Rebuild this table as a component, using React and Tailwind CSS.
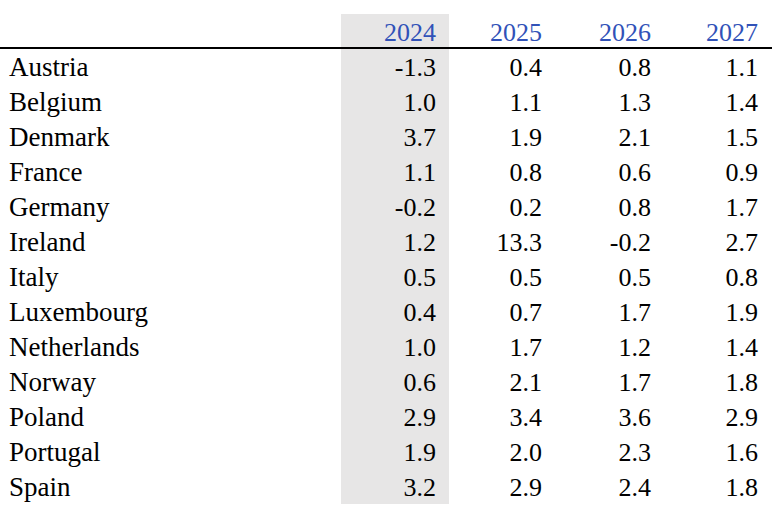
import React from "react";

const rows = [
  ["Austria", "-1.3", "0.4", "0.8", "1.1"],
  ["Belgium", "1.0", "1.1", "1.3", "1.4"],
  ["Denmark", "3.7", "1.9", "2.1", "1.5"],
  ["France", "1.1", "0.8", "0.6", "0.9"],
  ["Germany", "-0.2", "0.2", "0.8", "1.7"],
  ["Ireland", "1.2", "13.3", "-0.2", "2.7"],
  ["Italy", "0.5", "0.5", "0.5", "0.8"],
  ["Luxembourg", "0.4", "0.7", "1.7", "1.9"],
  ["Netherlands", "1.0", "1.7", "1.2", "1.4"],
  ["Norway", "0.6", "2.1", "1.7", "1.8"],
  ["Poland", "2.9", "3.4", "3.6", "2.9"],
  ["Portugal", "1.9", "2.0", "2.3", "1.6"],
  ["Spain", "3.2", "2.9", "2.4", "1.8"],
];

export default function App() {
  return (
    <div
      className="w-[776px] h-[528px] bg-white text-black pt-[14px]"
      style={{ fontFamily: '"Liberation Serif", "Times New Roman", serif' }}
    >
      <div className="w-[772px] grid grid-cols-[341px_108px_109px_109px_105px] text-[26px] leading-[37px]">
        <div className="h-[35px] border-b-2 border-black"></div>
        <div className="h-[35px] border-b-2 border-black bg-[#e7e6e6] text-right pr-[13px] text-[#3152b8]">2024</div>
        <div className="h-[35px] border-b-2 border-black text-right pr-[16px] text-[#3152b8]">2025</div>
        <div className="h-[35px] border-b-2 border-black text-right pr-[16px] text-[#3152b8]">2026</div>
        <div className="h-[35px] border-b-2 border-black text-right pr-[14px] text-[#3152b8]">2027</div>
        {rows.map((r) => (
          <React.Fragment key={r[0]}>
            <div className="h-[35px] pl-[9px] text-[27px]">{r[0]}</div>
            <div className="h-[35px] bg-[#e7e6e6] text-right pr-[13px]">{r[1]}</div>
            <div className="h-[35px] text-right pr-[16px]">{r[2]}</div>
            <div className="h-[35px] text-right pr-[16px]">{r[3]}</div>
            <div className="h-[35px] text-right pr-[14px]">{r[4]}</div>
          </React.Fragment>
        ))}
      </div>
    </div>
  );
}
